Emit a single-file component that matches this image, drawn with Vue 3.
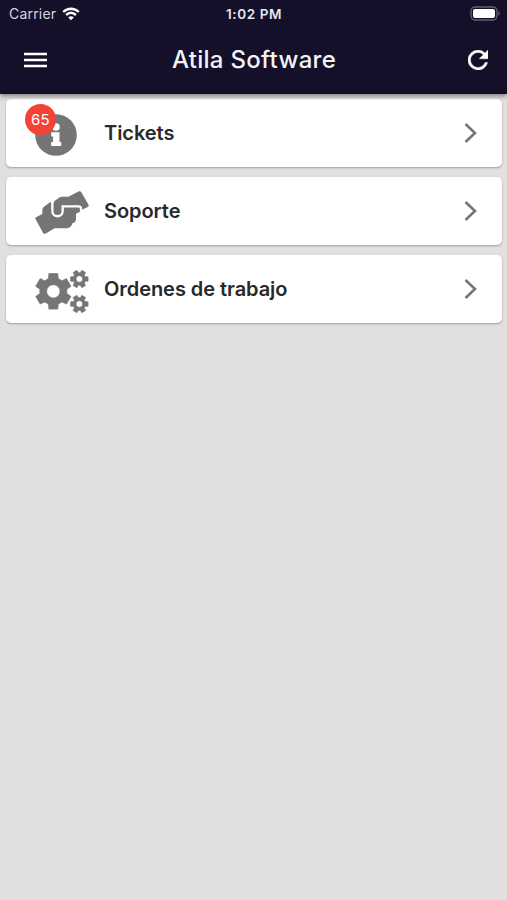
<script setup>
const items = [
  { label: 'Tickets', icon: 'info', badge: 65 },
  { label: 'Soporte', icon: 'hands' },
  { label: 'Ordenes de trabajo', icon: 'cogs' },
]

// Outline of a six-toothed gear with a round hole.
function gear(cx, cy, outer, body, hole, offset) {
  const pts = []
  for (let i = 0; i < 6; i++) {
    const a = i * 60 + offset
    for (const [r, d] of [[body, -21], [outer, -14], [outer, 14], [body, 21]]) {
      const t = ((a + d) * Math.PI) / 180
      pts.push(`${(cx + r * Math.cos(t)).toFixed(2)} ${(cy + r * Math.sin(t)).toFixed(2)}`)
    }
  }
  return `M${pts.join('L')}ZM${cx - hole} ${cy}a${hole} ${hole} 0 1 0 ${hole * 2} 0a${hole} ${hole} 0 1 0 ${-hole * 2} 0Z`
}

const gears = [
  gear(100, 109, 55, 41, 20, 30),
  gear(178, 72, 27, 19, 10, 0),
  gear(178, 147, 27, 19, 10, 0),
]
</script>

<template>
  <div class="screen">
    <header class="top">
      <div class="status">
        <div class="carrier">
          <span>Carrier</span>
          <svg class="wifi" viewBox="0 0 18 14">
            <path d="M1.2 5C5.8.6 12.2.6 16.8 5M4.1 8c3-2.8 6.8-2.8 9.8 0" />
            <path class="dot" d="M6.2 10.4Q9 8 11.8 10.4L9 13.3Z" />
          </svg>
        </div>
        <span class="time">1:02 PM</span>
        <svg class="battery" viewBox="0 0 31 16">
          <rect x="1" y="1" width="26" height="13" rx="4" fill="#15102a" stroke="#62606c" stroke-width="1.4" />
          <rect x="3" y="3" width="22" height="9" rx="2" fill="#fff" />
          <path d="M28.5 5q3 2.5 0 5z" fill="#62606c" />
        </svg>
      </div>
      <div class="bar">
        <svg class="menu" viewBox="0 0 23 16"><path d="M0 2h23M0 8h23M0 14h23" /></svg>
        <h1>Atila Software</h1>
        <svg class="refresh" viewBox="4 4 16 16">
          <path d="M17.65 6.35A7.96 7.96 0 0 0 12 4a8 8 0 1 0 7.73 10h-2.08A6 6 0 1 1 12 6c1.66 0 3.14.69 4.22 1.78L13 11h7V4z" />
        </svg>
      </div>
    </header>
    <main class="list">
      <div v-for="item in items" :key="item.label" class="card">
        <div class="icon">
          <svg v-if="item.icon === 'info'" class="info" viewBox="0 0 42 42">
            <circle cx="21" cy="21" r="20.8" fill="#757575" />
            <circle cx="21" cy="13" r="3.8" fill="#fff" />
            <path d="M16.2 18.2h8.3v9.7h1.7v4.2H16.2v-4.2h1.9v-5.5h-1.9z" fill="#fff" />
          </svg>
          <svg v-else-if="item.icon === 'hands'" class="hands" viewBox="45 30 162 138">
            <path d="M46 119Q45 116 49 114L67 105V91Q68 87 72 83L91 69 99 75 103 67 116 57Q120 53 127 53H145L177 37Q181 35 184 40L206 78Q207 82 203 84L184 94 180 98 168 104V120Q167 131 157 133 155 145 142 148H104L76 164Q71 166 69 161Z" fill="#757575" />
            <path d="M97 64V96C97 117 128 117 128 96V82H176Q183 82 183 89V97" fill="none" stroke="#fff" stroke-width="7" />
          </svg>
          <svg v-else class="cogs" viewBox="45 42 162 132">
            <path v-for="d in gears" :key="d" :d="d" fill="#757575" stroke="#757575" stroke-width="2" stroke-linejoin="round" fill-rule="evenodd" />
          </svg>
          <span v-if="item.badge" class="badge">{{ item.badge }}</span>
        </div>
        <span class="label">{{ item.label }}</span>
        <svg class="chevron" viewBox="0 0 13 20"><path d="M1.5 1 11 10 1.5 19" /></svg>
      </div>
    </main>
  </div>
</template>

<style>
body { background: #e0e0e0; }
</style>

<style scoped>
.screen {
  min-height: 900px;
  background: #e0e0e0;
  font-family: Inter, "Liberation Sans", sans-serif;
}
.top {
  position: relative;
  box-sizing: border-box;
  height: 94px;
  background: #15102a;
  color: #fff;
  box-shadow: 0 2px 5px rgba(0, 0, 0, .45);
}
.status {
  display: grid;
  grid-template-columns: 1fr auto 1fr;
  align-items: center;
  height: 27px;
  padding: 0 7px 0 9px;
  font-size: 14px;
}
.carrier { display: flex; align-items: center; gap: 6px; color: #d6d4de; letter-spacing: .2px; }
.wifi { width: 18px; height: 14px; fill: none; stroke: #fff; stroke-width: 2.4; }
.wifi .dot { fill: #fff; stroke: none; }
.time { margin-right: 1px; font-size: 13.5px; font-weight: 600; letter-spacing: .6px; color: #e8e6ee; }
.battery { width: 31px; height: 16px; justify-self: end; margin-right: -1px; }
.bar {
  display: grid;
  grid-template-columns: 1fr auto 1fr;
  align-items: center;
  height: 66px;
  padding: 0 19px 0 20px;
}
.menu { width: 23px; height: 16px; margin-left: 4px; stroke: #fff; stroke-width: 2.7; }
h1 { margin: 0; font-size: 24px; line-height: 30px; font-weight: 500; color: #f3f2f6; letter-spacing: .3px; }
.refresh { width: 20px; height: 20px; justify-self: end; fill: #fff; stroke: #fff; stroke-width: .3; }
.list { display: flex; flex-direction: column; gap: 9.7px; padding: 98.5px 5px 0 6px; margin-top: -94px; }
.card {
  display: flex;
  align-items: center;
  box-sizing: border-box;
  height: 68.5px;
  padding: 0 25px 0 29px;
  border-radius: 5px;
  background: #fff;
  box-shadow: 0 1px 2px rgba(0, 0, 0, .3);
}
.icon { position: relative; display: flex; width: 54px; margin-right: 15px; }
.info { width: 42px; height: 42px; margin-top: 4px; }
.hands { width: 54px; height: 46px; margin-top: 3px; }
.cogs { width: 54px; height: 44px; margin-top: 4px; }
.badge {
  position: absolute;
  left: -10px;
  top: -6px;
  width: 31px;
  height: 31px;
  border-radius: 50%;
  background: #f44336;
  color: #fff;
  font-size: 15px;
  line-height: 31px;
  text-align: center;
  letter-spacing: .3px;
}
.label { flex: 1; font-size: 20px; line-height: 26px; font-weight: 600; color: #292929; letter-spacing: -.06px; }
.chevron { width: 13px; height: 20px; fill: none; stroke: #757575; stroke-width: 2.6; }
</style>
